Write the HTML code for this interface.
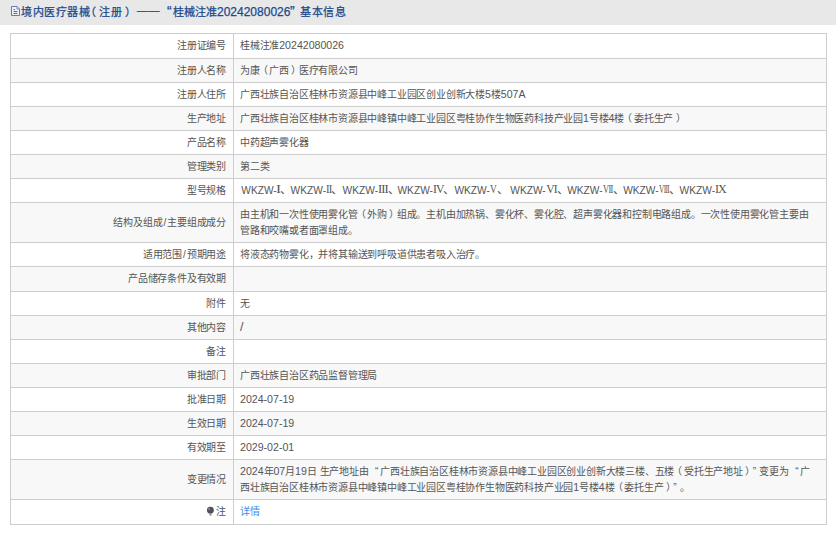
<!DOCTYPE html>
<html lang="zh-CN"><head><meta charset="utf-8"><style>
html,body{margin:0;padding:0;background:#fff;width:836px;height:533px;overflow:hidden;position:relative;}
body{font-family:"Liberation Sans",sans-serif;color:#555555;}
div{position:absolute;}
.hd{left:0;top:0;width:836px;height:25px;background:#e8e8e8;}
.h{color:#1a4a8c;font-size:11px;line-height:12px;white-space:nowrap;top:6px;-webkit-text-stroke:0.25px #1a4a8c;}
.r{left:11px;width:815px;}
.ln{left:10px;width:817px;height:1px;background:#cdcdcd;}
.vl{width:1px;background:#cdcdcd;}
.lb{right:610px;text-align:right;white-space:nowrap;font-size:10px;line-height:16px;letter-spacing:-0.2px;}
.vt{left:240px;white-space:nowrap;font-size:10px;line-height:16px;letter-spacing:-0.2px;}
.lk{color:#3a8ee8;}
.a{font-size:10.6px;letter-spacing:0;line-height:12px}
.sl{letter-spacing:0;padding:0 1px}
.rn{font-family:'Liberation Serif',serif;font-size:11.6px;letter-spacing:-0.9px;margin-top:-0.5px}
.ql{margin-left:6.5px;margin-right:2px}
.pl{position:relative;left:-1.8px}
.pr{position:relative;left:2.4px}
.qr{margin-left:5px;margin-right:3.5px}
</style></head><body>
<div class="hd"></div>
<svg style="position:absolute;left:11px;top:5px" width="10" height="12" viewBox="0 0 10 12"><path d="M0.5 1.5 H6 L8.5 4 V10.5 H0.5 Z" fill="#eef2fa" stroke="#6a78aa" stroke-width="1"/><path d="M6 1.5 V4 H8.5" fill="#dde4f2" stroke="#6a78aa" stroke-width="0.9"/><path d="M2.5 4.5 H4 M2.5 6.5 H6.5 M2.5 8.5 H6.5" stroke="#5a6898" stroke-width="1"/></svg>
<div class="h" style="left:21px;letter-spacing:0.5px">境内医疗器械</div>
<div class="h" style="left:85px;">（</div>
<div class="h" style="left:99px;letter-spacing:1px">注册</div>
<div class="h" style="left:125px;">）</div>
<div class="h" style="left:137px;letter-spacing:0.5px;top:4px">——</div>
<div class="h" style="left:167px;font-size:14px;top:5px">“</div>
<div class="h" style="left:173px;">桂械注准</div>
<div class="h" style="left:217px;font-size:12px">20242080026</div>
<div class="h" style="left:290px;font-size:14px;top:5px">”</div>
<div class="h" style="left:300px;letter-spacing:0.7px">基本信息</div>
<div class="lb" style="top:38.0px">注册证编号</div>
<div class="vt" id="v0_0" style="top:38.0px">桂械注准<span class="a">20242080026</span></div>
<div class="r" style="top:59px;height:23px;background:#f8f8f8"></div>
<div class="lb" style="top:62.5px">注册人名称</div>
<div class="vt" id="v1_0" style="top:62.5px">为康<span class="pl">（</span>广西<span class="pr">）</span>医疗有限公司</div>
<div class="lb" style="top:86.5px">注册人住所</div>
<div class="vt" id="v2_0" style="top:86.5px">广西壮族自治区桂林市资源县中峰工业园区创业创新大楼<span class="a">5</span>楼<span class="a">507A</span></div>
<div class="r" style="top:107px;height:23px;background:#f8f8f8"></div>
<div class="lb" style="top:110.5px">生产地址</div>
<div class="vt" id="v3_0" style="top:110.5px">广西壮族自治区桂林市资源县中峰镇中峰工业园区粤桂协作生物医药科技产业园<span class="a">1</span>号楼<span class="a">4</span>楼<span class="pl">（</span>委托生产<span class="pr">）</span></div>
<div class="lb" style="top:134.5px">产品名称</div>
<div class="vt" id="v4_0" style="top:134.5px">中药超声雾化器</div>
<div class="r" style="top:155px;height:23px;background:#f8f8f8"></div>
<div class="lb" style="top:158.5px">管理类别</div>
<div class="vt" id="v5_0" style="top:158.5px">第二类</div>
<div class="lb" style="top:182.5px">型号规格</div>
<div class="vt" style="left:241.3px;top:182.5px"><span class="a" style="font-size:10.2px">WKZW-</span></div>
<div class="vt rn" style="left:276.0px;top:182.5px;transform:scaleX(1.300);transform-origin:0 0">I</div>
<div class="vt" style="left:280.1px;top:182.5px;font-size:12px;margin-top:-1px">、</div>
<div class="vt" style="left:290.6px;top:182.5px"><span class="a" style="font-size:10.2px">WKZW-</span></div>
<div class="vt rn" style="left:325.7px;top:182.5px;transform:scaleX(0.920);transform-origin:0 0">II</div>
<div class="vt" style="left:331.4px;top:182.5px;font-size:12px;margin-top:-1px">、</div>
<div class="vt" style="left:342.6px;top:182.5px"><span class="a" style="font-size:10.2px">WKZW-</span></div>
<div class="vt rn" style="left:377.5px;top:182.5px;transform:scaleX(1.087);transform-origin:0 0">III</div>
<div class="vt" style="left:387.5px;top:182.5px;font-size:12px;margin-top:-1px">、</div>
<div class="vt" style="left:397.5px;top:182.5px"><span class="a" style="font-size:10.2px">WKZW-</span></div>
<div class="vt rn" style="left:432.5px;top:182.5px;transform:scaleX(1.011);transform-origin:0 0">IV</div>
<div class="vt" style="left:442.8px;top:182.5px;font-size:12px;margin-top:-1px">、</div>
<div class="vt" style="left:454.4px;top:182.5px"><span class="a" style="font-size:10.2px">WKZW-</span></div>
<div class="vt rn" style="left:490.4px;top:182.5px;transform:scaleX(0.800);transform-origin:0 0">V</div>
<div class="vt" style="left:497.0px;top:182.5px;font-size:12px;margin-top:-1px">、</div>
<div class="vt" style="left:510.3px;top:182.5px"><span class="a" style="font-size:10.2px">WKZW-</span></div>
<div class="vt rn" style="left:546.3px;top:182.5px;transform:scaleX(1.000);transform-origin:0 0">VI</div>
<div class="vt" style="left:556.5px;top:182.5px;font-size:12px;margin-top:-1px">、</div>
<div class="vt" style="left:567.2px;top:182.5px"><span class="a" style="font-size:10.2px">WKZW-</span></div>
<div class="vt rn" style="left:603.2px;top:182.5px;transform:scaleX(0.723);transform-origin:0 0">VII</div>
<div class="vt" style="left:612.8px;top:182.5px;font-size:12px;margin-top:-1px">、</div>
<div class="vt" style="left:623.2px;top:182.5px"><span class="a" style="font-size:10.2px">WKZW-</span></div>
<div class="vt rn" style="left:659.2px;top:182.5px;transform:scaleX(0.625);transform-origin:0 0">VIII</div>
<div class="vt" style="left:669.4px;top:182.5px;font-size:12px;margin-top:-1px">、</div>
<div class="vt" style="left:679.6px;top:182.5px"><span class="a" style="font-size:10.2px">WKZW-</span></div>
<div class="vt rn" style="left:714.6px;top:182.5px;transform:scaleX(1.044);transform-origin:0 0">IX</div>
<div class="r" style="top:203px;height:39px;background:#f8f8f8"></div>
<div class="lb" style="top:214.5px">结构及组成<span class="sl">/</span>主要组成成分</div>
<div class="vt" id="v7_0" style="top:206.5px">由主机和一次性使用雾化管<span class="pl">（</span>外购<span class="pr">）</span>组成。主机由加热锅、雾化杯、雾化腔、超声雾化器和控制电路组成。一次性使用雾化管主要由</div>
<div class="vt" id="v7_1" style="top:222.5px">管路和咬嘴或者面罩组成。</div>
<div class="lb" style="top:246.5px">适用范围<span class="sl">/</span>预期用途</div>
<div class="vt" id="v8_0" style="top:246.5px">将液态药物雾化，并将其输送到呼吸道供患者吸入治疗。</div>
<div class="r" style="top:267px;height:24px;background:#f8f8f8"></div>
<div class="lb" style="top:271.0px">产品储存条件及有效期</div>
<div class="lb" style="top:295.5px">附件</div>
<div class="vt" id="v10_0" style="top:295.5px">无</div>
<div class="r" style="top:316px;height:23px;background:#f8f8f8"></div>
<div class="lb" style="top:319.5px">其他内容</div>
<div class="vt" style="top:319.5px;font-size:12.5px;margin-top:-0.5px">/</div>
<div class="lb" style="top:343.5px">备注</div>
<div class="r" style="top:364px;height:23px;background:#f8f8f8"></div>
<div class="lb" style="top:367.5px">审批部门</div>
<div class="vt" id="v13_0" style="top:367.5px">广西壮族自治区药品监督管理局</div>
<div class="lb" style="top:391.5px">批准日期</div>
<div class="vt" id="v14_0" style="top:391.5px"><span class="a">2024-07-19</span></div>
<div class="r" style="top:412px;height:23px;background:#f8f8f8"></div>
<div class="lb" style="top:415.5px">生效日期</div>
<div class="vt" id="v15_0" style="top:415.5px"><span class="a">2024-07-19</span></div>
<div class="lb" style="top:439.5px">有效期至</div>
<div class="vt" id="v16_0" style="top:439.5px"><span class="a">2029-02-01</span></div>
<div class="r" style="top:460px;height:39px;background:#f8f8f8"></div>
<div class="lb" style="top:471.5px">变更情况</div>
<div class="vt" id="v17_0" style="top:463.5px"><span class="a">2024</span>年<span class="a">07</span>月<span class="a">19</span>日<span class="a"> </span>生产地址由<span class="ql">“</span>广西壮族自治区桂林市资源县中峰工业园区创业创新大楼三楼、五楼<span class="pl">（</span>受托生产地址<span class="pr">）</span><span class="qr">”</span>变更为<span class="ql">“</span>广</div>
<div class="vt" id="v17_1" style="top:479.5px">西壮族自治区桂林市资源县中峰镇中峰工业园区粤桂协作生物医药科技产业园<span class="a">1</span>号楼<span class="a">4</span>楼<span class="pl">（</span>委托生产<span class="pr">）</span><span class="qr">”</span>。</div>
<div class="lb" style="top:504.0px">注</div>
<div class="vt lk" style="top:504.0px">详情</div>
<div class="ln" style="top:33px"></div>
<div class="ln" style="top:58px"></div>
<div class="ln" style="top:82px"></div>
<div class="ln" style="top:106px"></div>
<div class="ln" style="top:130px"></div>
<div class="ln" style="top:154px"></div>
<div class="ln" style="top:178px"></div>
<div class="ln" style="top:202px"></div>
<div class="ln" style="top:242px"></div>
<div class="ln" style="top:266px"></div>
<div class="ln" style="top:291px"></div>
<div class="ln" style="top:315px"></div>
<div class="ln" style="top:339px"></div>
<div class="ln" style="top:363px"></div>
<div class="ln" style="top:387px"></div>
<div class="ln" style="top:411px"></div>
<div class="ln" style="top:435px"></div>
<div class="ln" style="top:459px"></div>
<div class="ln" style="top:499px"></div>
<div class="ln" style="top:524px"></div>
<svg style="position:absolute;left:206px;top:506px" width="9" height="11" viewBox="0 0 9 11"><circle cx="4.4" cy="4.2" r="3.4" fill="#50505a"/><rect x="3.5" y="7.2" width="2" height="2.4" fill="#8a8a90"/><circle cx="3.2" cy="3" r="0.9" fill="#9a9aa4"/></svg>
<div class="vl" style="left:10px;top:33px;height:492px"></div>
<div class="vl" style="left:233px;top:33px;height:492px"></div>
<div class="vl" style="left:826px;top:33px;height:492px"></div>
</body></html>
